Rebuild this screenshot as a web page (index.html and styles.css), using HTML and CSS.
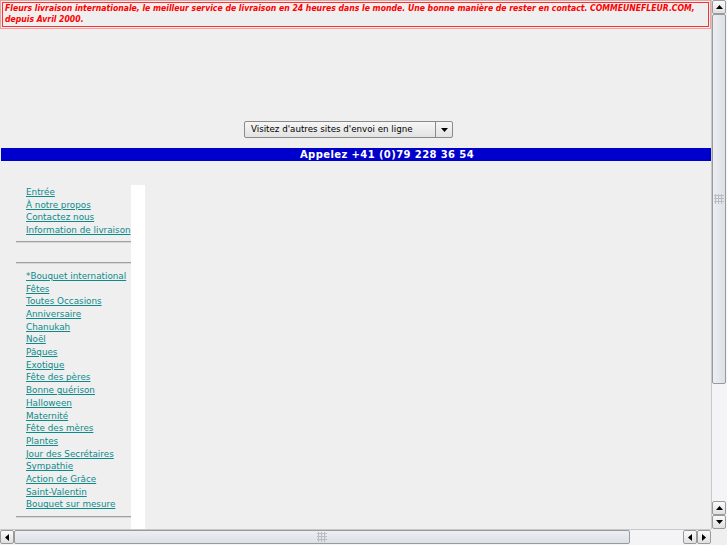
FILE: index.html
```html
<!DOCTYPE html>
<html lang="fr">
<head>
<meta charset="utf-8">
<title>Fleurs livraison internationale</title>
<link rel="stylesheet" href="styles.css">
</head>
<body>
<div class="page">
  <div class="banner"><div class="banner-inner">Fleurs livraison internationale, le meilleur service de livraison en 24 heures dans le monde. Une bonne manière de rester en contact. COMMEUNEFLEUR.COM, depuis Avril 2000.</div></div>
  <div class="select-row">
    <div class="select"><span class="select-label">Visitez d'autres sites d'envoi en ligne</span><span class="select-btn"><svg width="7" height="4" viewBox="0 0 7 4"><path d="M0 0h7L3.5 4z" fill="#000"/></svg></span></div>
  </div>
  <div class="callbar">Appelez +41 (0)79 228 36 54</div>
  <div class="main">
    <div class="nav">
      <ul class="links first">
        <li><a href="#">Entrée</a></li>
        <li><a href="#">À notre propos</a></li>
        <li><a href="#">Contactez nous</a></li>
        <li><a href="#">Information de livraison</a></li>
      </ul>
      <hr class="rule">
      <div class="spacer"></div>
      <hr class="rule">
      <ul class="links second">
        <li><a href="#">*Bouquet international</a></li>
        <li><a href="#">Fêtes</a></li>
        <li><a href="#">Toutes Occasions</a></li>
        <li><a href="#">Anniversaire</a></li>
        <li><a href="#">Chanukah</a></li>
        <li><a href="#">Noël</a></li>
        <li><a href="#">Pâques</a></li>
        <li><a href="#">Exotique</a></li>
        <li><a href="#">Fête des pères</a></li>
        <li><a href="#">Bonne guérison</a></li>
        <li><a href="#">Halloween</a></li>
        <li><a href="#">Maternité</a></li>
        <li><a href="#">Fête des mères</a></li>
        <li><a href="#">Plantes</a></li>
        <li><a href="#">Jour des Secrétaires</a></li>
        <li><a href="#">Sympathie</a></li>
        <li><a href="#">Action de Grâce</a></li>
        <li><a href="#">Saint-Valentin</a></li>
        <li><a href="#">Bouquet sur mesure</a></li>
      </ul>
      <hr class="rule last">
    </div>
    <div class="gutter"></div>
  </div>
</div>

<div class="vscroll">
  <div class="sb-btn"><svg width="7" height="4" viewBox="0 0 7 4"><path d="M3.5 0L7 4H0z" fill="#000"/></svg></div>
  <div class="v-thumb"><div class="grip"></div></div>
  <div class="v-track"></div>
  <div class="sb-btn"><svg width="7" height="4" viewBox="0 0 7 4"><path d="M3.5 0L7 4H0z" fill="#000"/></svg></div>
  <div class="sb-btn"><svg width="7" height="4" viewBox="0 0 7 4"><path d="M0 0h7L3.5 4z" fill="#000"/></svg></div>
</div>
<div class="hscroll">
  <div class="sb-btn"><svg width="4" height="7" viewBox="0 0 4 7"><path d="M0 3.5L4 0v7z" fill="#000"/></svg></div>
  <div class="h-thumb"><div class="grip"></div></div>
  <div class="h-track"></div>
  <div class="sb-btn"><svg width="4" height="7" viewBox="0 0 4 7"><path d="M0 3.5L4 0v7z" fill="#000"/></svg></div>
  <div class="sb-btn"><svg width="4" height="7" viewBox="0 0 4 7"><path d="M4 3.5L0 0v7z" fill="#000"/></svg></div>
</div>
<div class="corner"></div>
</body>
</html>
```
FILE: styles.css
```css
html, body {
  margin: 0;
  padding: 0;
  background: #efefef;
  overflow: hidden;
}
body {
  width: 727px;
  height: 545px;
  font-family: "DejaVu Sans", sans-serif;
}
.page {
  width: 711px;
  height: 529px;
  overflow: hidden;
}
.banner {
  border: 1px solid #f4a0a0;
  padding: 1px;
  width: 707px;
}
.banner-inner {
  border: 1px solid #ff3030;
  padding: 0 0 1px 2px;
  font-family: "DejaVu Sans Condensed", "DejaVu Sans", sans-serif;
  font-stretch: condensed;
  font-weight: bold;
  font-style: italic;
  font-size: 8.6px;
  line-height: 11px;
  color: #ff0000;
}
.select-row {
  display: flex;
  justify-content: center;
  padding: 92px 14px 0 0;
  height: 27px;
}
.select {
  display: flex;
  width: 209px;
  height: 17px;
  box-sizing: border-box;
  border: 1px solid #8a8a8a;
  border-radius: 2px;
  background: linear-gradient(#f6f6f6, #e2e2e2);
  font-size: 8.7px;
  align-items: stretch;
}
.select-label {
  flex: 1;
  padding-left: 6px;
  line-height: 15px;
  color: #000;
}
.select-btn {
  width: 16px;
  border-left: 1px solid #8a8a8a;
  display: flex;
  align-items: center;
  justify-content: center;
}
.callbar {
  margin: 0 0 0 1px;
  height: 13px;
  background: #0000cc;
  color: #fff;
  font-weight: bold;
  font-size: 10px;
  line-height: 13px;
  letter-spacing: 0.4px;
  padding-left: 62px;
  text-align: center;
}
.main {
  display: flex;
  padding: 24px 0 0 16px;
}
.nav {
  width: 115px;
}
.gutter {
  width: 14px;
  background: #fff;
  height: 360px;
}
.links {
  list-style: none;
  margin: 0;
  padding: 0 0 0 10px;
  font-size: 8.8px;
  line-height: 12.7px;
}
.links.first {
  padding-top: 1px;
}
.links.second {
  padding-top: 2px;
}
.links a {
  color: #0c8a8a;
  text-decoration: underline;
  white-space: nowrap;
}
.rule {
  margin: 4px 0 4px 0;
  border: 0;
  border-top: 1px solid #a0a0a0;
  border-bottom: 1px solid #d8d8d8;
  height: 0;
}
.rule.last {
  margin-top: 5px;
}
.spacer {
  height: 11px;
}

/* scrollbars (window chrome overlay) */
.vscroll {
  position: absolute;
  left: 711px;
  top: 0;
  width: 16px;
  height: 529px;
  display: flex;
  flex-direction: column;
  background: #f4f4f6;
  border-left: 1px solid #c8c8c8;
  box-sizing: border-box;
}
.hscroll {
  position: absolute;
  left: 0;
  top: 529px;
  width: 711px;
  height: 16px;
  display: flex;
  background: #f4f4f6;
  border-top: 1px solid #c8c8c8;
  box-sizing: border-box;
}
.corner {
  position: absolute;
  left: 711px;
  top: 529px;
  width: 16px;
  height: 16px;
  background: #efefef;
}
.sb-btn {
  width: 14px;
  height: 14px;
  flex: none;
  box-sizing: border-box;
  border: 1px solid #9a9a9a;
  border-radius: 2px;
  background: linear-gradient(#fafafa, #e0e0e0);
  display: flex;
  align-items: center;
  justify-content: center;
}
.v-thumb {
  height: 370px;
  flex: none;
  box-sizing: border-box;
  border: 1px solid #9a9a9a;
  border-radius: 2px;
  background: linear-gradient(90deg, #eceef2, #dde0e6);
  width: 14px;
  display: flex;
  align-items: center;
  justify-content: center;
}
.v-track {
  flex: 1;
}
.h-thumb {
  width: 616px;
  flex: none;
  box-sizing: border-box;
  border: 1px solid #9a9a9a;
  border-radius: 2px;
  background: linear-gradient(#eceef2, #dde0e6);
  height: 14px;
  display: flex;
  align-items: center;
  justify-content: center;
}
.h-track {
  flex: 1;
}
.grip {
  width: 10px;
  height: 10px;
  background-image: radial-gradient(circle, #b8bcc4 1px, transparent 1.2px);
  background-size: 3px 3px;
}
```
